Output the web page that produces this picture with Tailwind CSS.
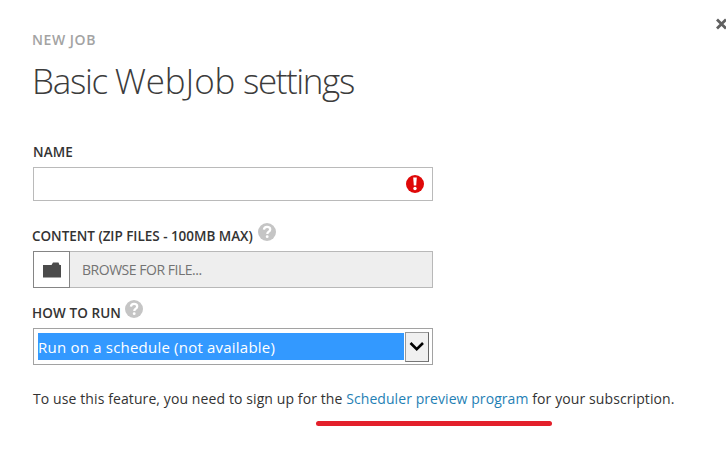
<!DOCTYPE html>
<html lang="en">
<head>
<meta charset="utf-8">
<title>Basic WebJob settings</title>
<script src="https://cdn.jsdelivr.net/npm/@tailwindcss/browser@4"></script>
</head>
<body class="bg-white font-['Open_Sans','Noto_Sans',sans-serif] text-[14px] text-[#333]">
<main class="relative flex h-[453px] w-[726px] flex-col items-start overflow-hidden pl-[33px] pt-[30px] whitespace-nowrap">
  <button class="absolute left-[716px] top-[18px]" aria-label="Close">
    <svg class="block" width="12" height="12" viewBox="0 0 12 12"><path d="M1 1.5L10 10.5M10 1.5L1 10.5" stroke="#606060" stroke-width="2.8"/></svg>
  </button>
  <p class="-ml-px h-5 font-semibold leading-5 tracking-[0.55px] text-[#a3a3a3]"><span>NEW JOB</span></p>
  <h1 class="-ml-px mt-[6px] h-[50px] text-[35px] font-light leading-[50px] text-[#3c3c3c]"><span class="tracking-[-1.3px]">Basic </span><span class="tracking-[-0.1px]">WebJob</span><span class="tracking-[-1.4px]"> settings</span></h1>

  <label class="mt-9 h-5 text-[13.5px] font-semibold leading-5 tracking-[0.1px]"><span>NAME</span></label>
  <div class="mt-[5px] flex h-[34px] w-[400px] items-center justify-end border border-[#bababa] pr-[7px]">
    <svg width="20" height="20" viewBox="0 0 20 20"><circle cx="10" cy="10" r="9" fill="#df0808"/><path d="M8.2 3.5h3.6l-.6 8H8.8z" fill="#fff"/><circle cx="10" cy="14.5" r="1.7" fill="#fff"/></svg>
  </div>

  <div class="-ml-px mt-[21px] flex h-[29px]">
    <label class="mt-[4px] h-5 w-[221px] text-[13.5px] font-semibold leading-5 tracking-[-0.03px]"><span>CONTENT (ZIP FILES - 100MB MAX)</span></label>
    <svg class="ml-[4px]" width="20" height="20" viewBox="0 0 20 20"><circle cx="10" cy="10" r="9" fill="#c5c5c5"/><path d="M6.9 7.6C7.1 5.6 8.3 4.8 10 4.8c1.9 0 3.2 1 3.2 2.6 0 2.3-2.9 2.3-2.9 4.7" fill="none" stroke="#fff" stroke-width="2.3"/><circle cx="10.2" cy="14.7" r="1.4" fill="#fff"/></svg>
  </div>
  <div class="flex h-[37px] w-[400px] border border-[#b8b8b8] bg-[#eee]">
    <div class="-my-px -ml-px flex w-[37px] items-center justify-center border border-[#858585] bg-white">
      <svg width="18" height="16" viewBox="0 0 18 16"><path d="M0 3h8.5l1.5-2.5h5.5L16.5 3H18v12.5H0z" fill="#4b4b4b"/></svg>
    </div>
    <p class="ml-[12px] h-[35px] text-[14px] leading-[36px] tracking-[-0.48px] text-[#737373]"><span>BROWSE FOR FILE...</span></p>
  </div>

  <div class="-ml-px mt-[11px] flex h-[29px]">
    <label class="mt-[4px] h-5 w-[88px] text-[13.5px] font-semibold leading-5 tracking-[0.1px]"><span>HOW TO RUN</span></label>
    <svg class="ml-[4px]" width="20" height="20" viewBox="0 0 20 20"><circle cx="10" cy="10" r="9" fill="#c5c5c5"/><path d="M6.9 7.6C7.1 5.6 8.3 4.8 10 4.8c1.9 0 3.2 1 3.2 2.6 0 2.3-2.9 2.3-2.9 4.7" fill="none" stroke="#fff" stroke-width="2.3"/><circle cx="10.2" cy="14.7" r="1.4" fill="#fff"/></svg>
  </div>
  <div class="flex h-[37px] w-[400px] border border-[#a2a2a2] bg-white py-[4px] pl-[4px] pr-[3px]">
    <p class="h-[27px] w-[366px] bg-[#3399ff] text-[15px] leading-[28px] tracking-[0.21px] text-white"><span>Run on a schedule (not available)</span></p>
    <div class="-my-px ml-[1px] flex h-[30px] w-[24px] items-center justify-center border border-[#999] border-b-[#777] border-r-[#666] bg-[#f0f0f0]">
      <svg width="16" height="12" viewBox="0 0 16 12"><path d="M1.5 2l6.2 6.2L14 2" fill="none" stroke="#000" stroke-width="2.6"/></svg>
    </div>
  </div>
  <p class="mt-[24px] h-5 text-[14px] leading-5 tracking-[0.1px]"><span>To use this feature, you need to sign up for the </span><a class="tracking-[0.07px] text-[#1f7fb5]">Scheduler preview program</a><span> for your subscription.</span></p>
  <div class="ml-[283px] mt-[12px] h-[5px] w-[236px] rounded-full bg-[#e3202b]"></div>
</main>
</body>
</html>
